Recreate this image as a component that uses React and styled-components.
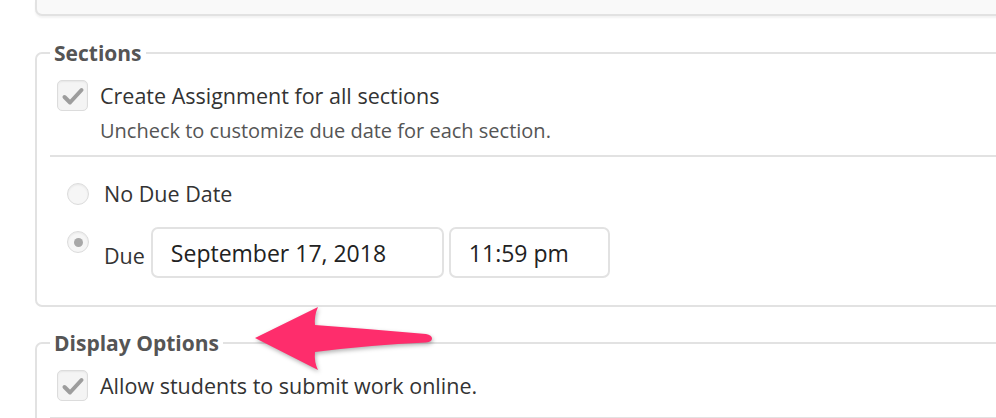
import React from 'react';
import styled, { createGlobalStyle } from 'styled-components';

const GlobalStyle = createGlobalStyle`
  body {
    margin: 0;
    background: #fff;
    font-family: "Open Sans", "Liberation Sans", sans-serif;
    color: #333;
  }
`;

function CheckMark() {
  return (
    <svg width="31" height="31" viewBox="0 0 31 31">
      <polyline points="7.5,17 13,22.5 24.5,10" fill="none" stroke="#9d9d9d" strokeWidth="4" strokeLinecap="round" strokeLinejoin="round" />
    </svg>
  );
}

function Arrow() {
  return (
    <ArrowSvg width="190" height="80" viewBox="0 0 190 80">
      <path
        d="M5 38 L68 7 Q64 16 65 25 Q120 29 176 34 Q182 35 182 38.5 Q182 42 176 42.5 Q120 45 65 52 Q64 62 68 70 Z"
        fill="#fe2d6c"
      />
    </ArrowSvg>
  );
}

function App() {
  return (
    <Page>
      <GlobalStyle />
      <TopPanel />

      <Group>
        <Legend>Sections</Legend>
        <CheckRow>
          <Checkbox><CheckMark /></Checkbox>
          <Label>Create Assignment for all sections</Label>
        </CheckRow>
        <Hint>Uncheck to customize due date for each section.</Hint>
        <Divider />
        <RadioRow>
          <Radio />
          <Label>No Due Date</Label>
        </RadioRow>
        <DueRow>
          <Radio checked />
          <DueLabel>Due</DueLabel>
          <Field width={293}>September 17, 2018</Field>
          <Field width={161}>11:59 pm</Field>
        </DueRow>
      </Group>

      <Group last>
        <Legend>Display Options</Legend>
        <CheckRow>
          <Checkbox><CheckMark /></Checkbox>
          <Label>Allow students to submit work online.</Label>
        </CheckRow>
        <Divider spaced />
      </Group>

      <Arrow />
    </Page>
  );
}

export default App;

const Page = styled.div`
  position: relative;
  width: 996px;
  height: 418px;
  overflow: hidden;
  padding-left: 35px;
  box-sizing: border-box;
`;

const TopPanel = styled.div`
  height: 16px;
  margin-right: -30px;
  background: #f9f9f9;
  border: 2px solid #e2e2e2;
  border-top: none;
  border-radius: 0 0 7px 7px;
  box-shadow: 0 2px 2px rgba(0, 0, 0, 0.05);
  box-sizing: border-box;
`;

const Group = styled.fieldset`
  margin: ${p => (p.last ? '24px' : '25px')} -30px 0 0;
  padding: 0 0 ${p => (p.last ? '20px' : '27px')} 13px;
  border: 2px solid #e2e2e2;
  border-radius: 7px;
  min-width: 0;
`;

const Legend = styled.legend`
  padding: 0 4px;
  font-size: 21px;
  line-height: 24px;
  font-weight: 700;
  color: #555;
`;

const CheckRow = styled.div`
  display: flex;
  align-items: center;
  gap: 12px;
  margin-top: 15px;
  padding-left: 7px;
`;

const Checkbox = styled.span`
  width: 31px;
  height: 31px;
  flex: none;
  box-sizing: border-box;
  border: 1px solid #dcdcdc;
  border-radius: 5px;
  background: #f4f4f4;
  box-shadow: inset 0 1px 2px rgba(0, 0, 0, 0.06);
  display: flex;
  align-items: center;
  justify-content: center;
  svg { margin: -1px; }
`;

const Label = styled.span`
  font-size: 21.5px;
  line-height: 26px;
  color: #333;
`;

const Hint = styled.div`
  margin-top: 8px;
  padding-left: 50px;
  font-size: 20px;
  line-height: 24px;
  color: #555;
`;

const Divider = styled.div`
  height: 2px;
  background: #e2e2e2;
  margin-top: ${p => (p.spaced ? '16px' : '12px')};
`;

const RadioRow = styled.div`
  display: flex;
  align-items: center;
  gap: 15px;
  margin-top: 24px;
  padding-left: 17px;
`;

const Radio = styled.span`
  width: 22px;
  height: 22px;
  flex: none;
  box-sizing: border-box;
  border-radius: 50%;
  border: 1px solid #dcdcdc;
  background: #f6f6f6;
  box-shadow: inset 0 1px 2px rgba(0, 0, 0, 0.06);
  display: flex;
  align-items: center;
  justify-content: center;
  &::after {
    content: '';
    display: ${p => (p.checked ? 'block' : 'none')};
    width: 9px;
    height: 9px;
    border-radius: 50%;
    background: #a8a8a8;
  }
`;

const DueRow = styled.div`
  display: flex;
  align-items: flex-start;
  margin-top: 20px;
  padding-left: 17px;
  ${Radio} { margin-top: 4px; margin-right: 15px; }
`;

const DueLabel = styled.span`
  font-size: 21.5px;
  line-height: 26px;
  color: #333;
  margin-top: 16px;
  margin-right: 6px;
`;

const Field = styled.div`
  width: ${p => p.width}px;
  height: 51px;
  box-sizing: border-box;
  border: 2px solid #e2e2e2;
  border-radius: 7px;
  padding-left: 18px;
  margin-right: 5px;
  display: flex;
  align-items: center;
  font-size: 23px;
  color: #222;
`;

const ArrowSvg = styled.svg`
  position: absolute;
  left: 250px;
  top: 300px;
  filter: drop-shadow(1px 2px 2px rgba(0, 0, 0, 0.3));
`;
